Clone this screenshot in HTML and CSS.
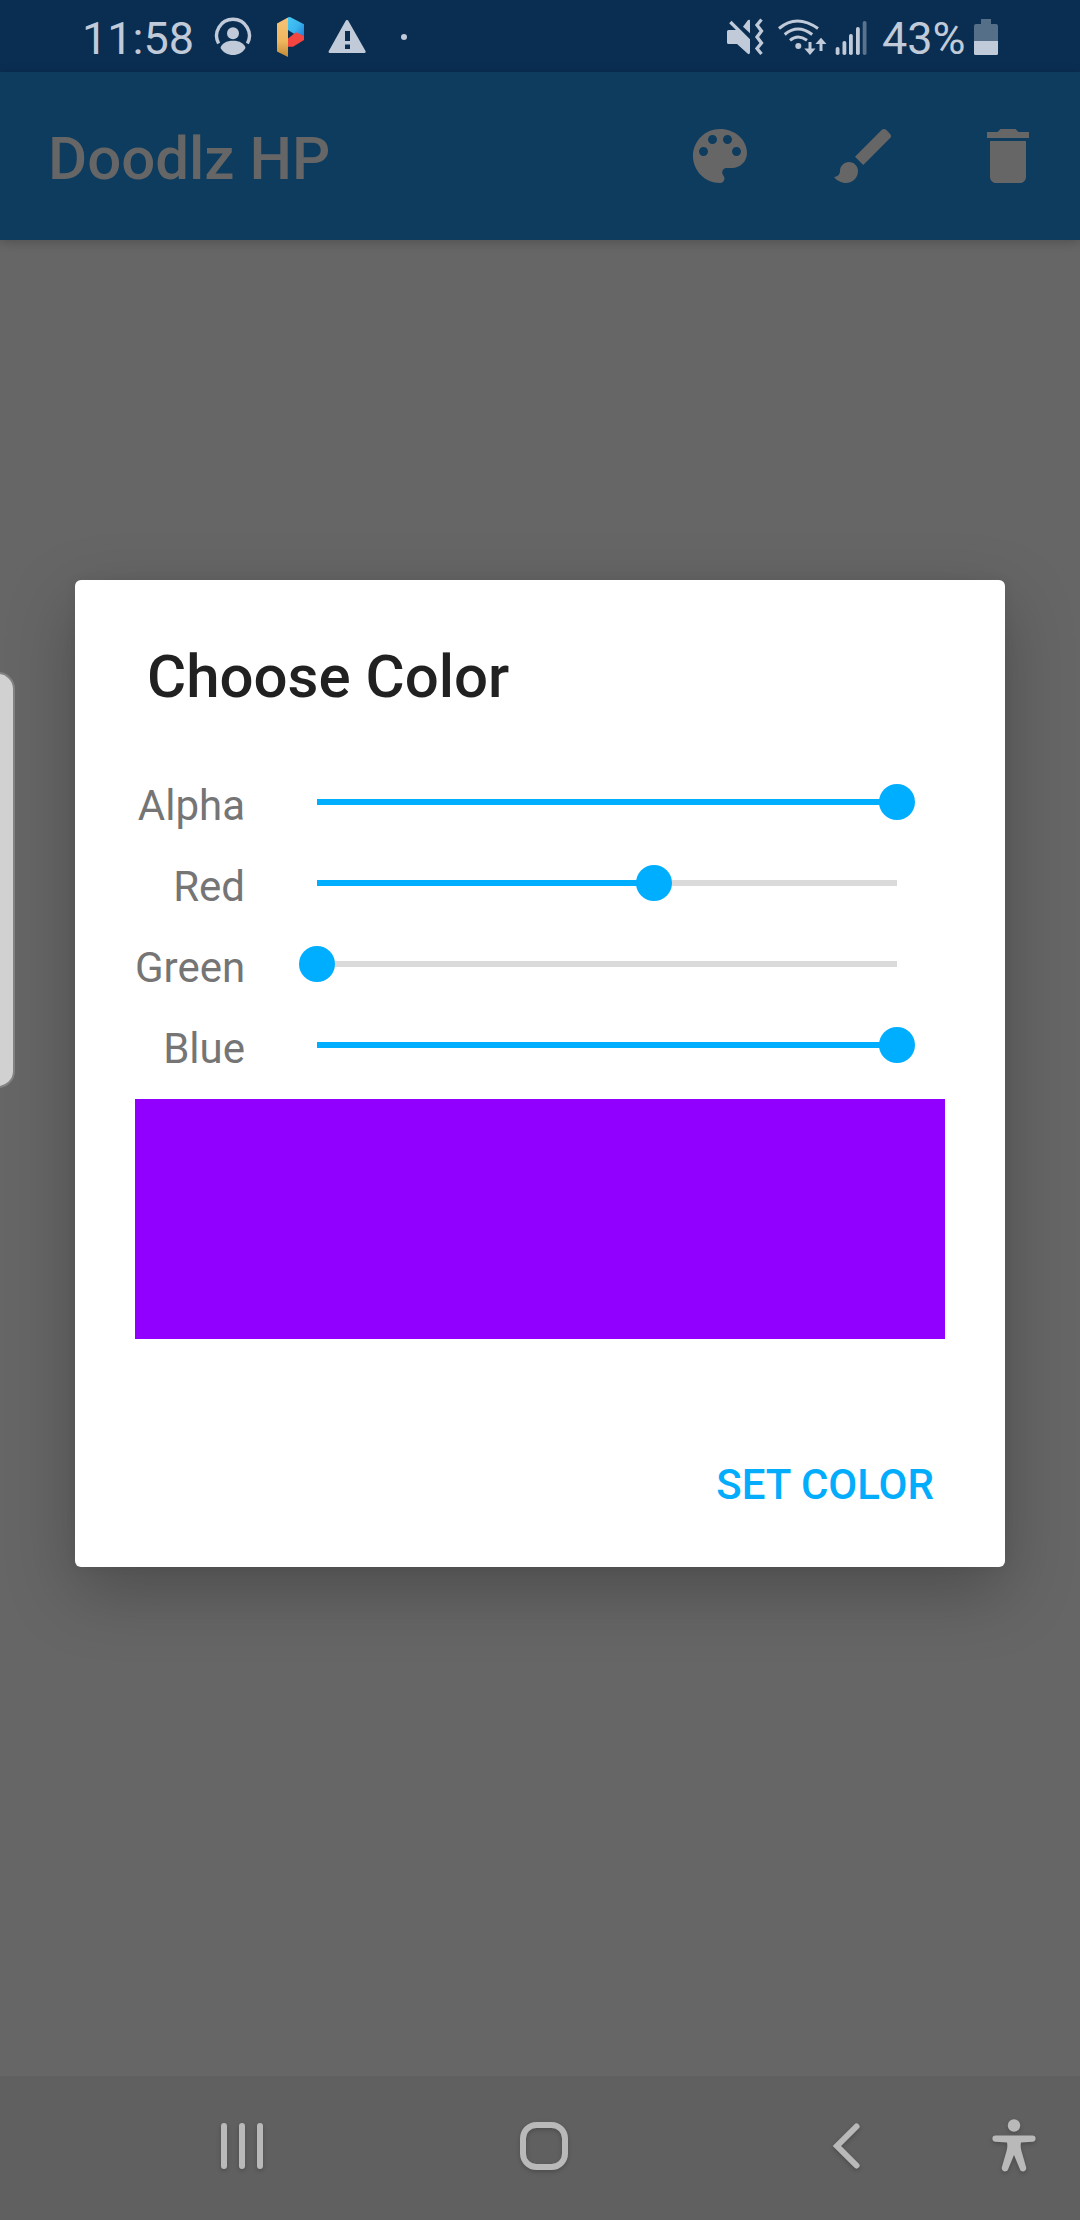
FILE: index.html
```html
<!DOCTYPE html>
<html lang="en">
<head>
<meta charset="utf-8">
<title>Doodlz HP</title>
<link rel="stylesheet" href="styles.css">
</head>
<body>
<div class="screen">
  <header class="status-bar">
    <div class="status-group">
      <span class="clock">11:58</span>
      <svg class="icon-user" width="38" height="40" viewBox="214 17 38 40" fill="currentColor">
        <path d="M218.6 43.5A16.4 16.4 0 1 1 247.4 43.5" fill="none" stroke="currentColor" stroke-width="3.4"/>
        <circle cx="233" cy="33.2" r="6"/>
        <path d="M220.5 48c1-4.500 6-7.200 12.500-7.200s11.500 2.700 12.500 7.200c-2.500 4.500-7.500 7-12.500 7s-10-2.500-12.500-7z"/>
      </svg>
      <svg class="icon-p" width="30" height="42" viewBox="276 16 30 42">
        <defs>
          <linearGradient id="gold" x1="0" y1="0" x2="0" y2="1"><stop offset="0" stop-color="#f6c277"/><stop offset=".6" stop-color="#f0b65e"/><stop offset="1" stop-color="#c08b37"/></linearGradient>
          <linearGradient id="sky" x1="0" y1="0" x2="1" y2="1"><stop offset="0" stop-color="#46c8f4"/><stop offset=".5" stop-color="#39b4ee"/><stop offset="1" stop-color="#1c72d2"/></linearGradient>
        </defs>
        <path d="M288 17.200 290 17l14 7.300V40L288 30z" fill="url(#sky)"/>
        <path d="M288 38.500l8-6.300 8 3.800v4l-11 6.800h-5z" fill="#f54540"/>
        <path d="M277 23.500l11-6V57l-11-5.500z" fill="url(#gold)"/>
      </svg>
      <svg class="icon-warn" width="38" height="34" viewBox="328 20 38 34">
        <path fill="currentColor" fill-rule="evenodd" d="M345.700 20.700q1.300-1.500 2.600 0L365.500 51q.6 2-1.200 2H330q-2-.1-1.200-2zM345 31v10h5V31zM345 44.500V49h5v-4.500z"/>
      </svg>
      <span class="more-dot"></span>
    </div>
    <div class="status-group">
      <svg width="38" height="38" viewBox="727 18 38 38" fill="currentColor">
        <path d="M727 31.500q0-1.500 1.500-1.500h7.500l-6.800-6.700 2.300-2.500L750 39.200V52q0 3-2.200 1.800L737 44h-8.500q-1.500 0-1.500-1.500zM743 26.800l5-6.800q2-1 2 .8v12.400z"/>
        <path d="M761.500 19.500l-4.500 5.500 4.500 6-4.500 6 4.500 6-4.500 5.500 4.500 5.500" fill="none" stroke="currentColor" stroke-width="3.300"/>
      </svg>
      <svg class="icon-wifi" width="50" height="38" viewBox="777 18 50 38">
        <g fill="none" stroke="currentColor" stroke-width="3">
          <path d="M779 28.500q17.500-15 39 0M784.700 34.500q13-11 27.500 0M790 40.300q8-6.500 17 0"/>
        </g>
        <circle cx="798.300" cy="46" r="3" fill="currentColor"/>
        <path fill="currentColor" d="M808.500 42h3v6.500h4L810 55l-5.700-6.500h4.200zM819.500 51h3v-7h4L821 37.800l-5.600 6.200h4.100z"/>
      </svg>
      <svg class="icon-signal" width="34" height="36" viewBox="835 20 34 36" fill="currentColor">
        <rect x="835.700" y="47" width="3.800" height="8" rx="1.800"/><rect x="842.500" y="41" width="3.800" height="14" rx="1.800"/><rect x="849" y="34" width="3.800" height="21" rx="1.800"/><rect x="856" y="27" width="3.800" height="28" rx="1.800"/><rect x="862.700" y="21" width="3.800" height="34" rx="1.800" fill="#5a728b"/>
      </svg>
      <span class="battery-level">43%</span>
      <svg class="icon-battery" width="24" height="36" viewBox="974 19 24 36">
        <path fill="#566f88" d="M974 42V26q0-2 2-2h5v-5h10v5h5q2 0 2 2v16z"/>
        <path fill="currentColor" d="M974 41h24v12.500q0 1.500-1.500 1.500h-21q-1.500 0-1.500-1.500z"/>
      </svg>
    </div>
  </header>

  <div class="app-bar">
    <h1 class="app-title">Doodlz HP</h1>
    <nav class="actions">
      <svg viewBox="0 0 24 24"><path d="M12 3c-4.970 0-9 4.030-9 9s4.030 9 9 9c.83 0 1.500-.67 1.500-1.500 0-.39-.15-.74-.39-1.010-.23-.26-.38-.61-.38-.99 0-.83.67-1.500 1.500-1.500H16c2.760 0 5-2.240 5-5 0-4.420-4.030-8-9-8zm-5.500 9c-.83 0-1.500-.67-1.500-1.500S5.670 9 6.500 9 8 9.670 8 10.500 7.330 12 6.500 12zm3-4C8.670 8 8 7.330 8 6.500S8.670 5 9.500 5s1.500.67 1.500 1.500S10.330 8 9.500 8zm5 0c-.83 0-1.500-.67-1.500-1.500S13.670 5 14.500 5s1.500.67 1.500 1.500S15.330 8 14.500 8zm3 4c-.83 0-1.500-.67-1.500-1.500S16.670 9 17.500 9s1.500.67 1.500 1.500-.67 1.500-1.500 1.500z"/></svg>
      <svg viewBox="0 0 24 24"><path d="M7 14c-1.660 0-3 1.340-3 3 0 1.310-1.160 2-2 2 .92 1.220 2.490 2 4 2 2.210 0 4-1.790 4-4 0-1.660-1.340-3-3-3zm13.710-9.370l-1.340-1.340c-.39-.39-1.020-.39-1.410 0L9 12.250 11.750 15l8.960-8.960c.39-.39.39-1.020 0-1.410z"/></svg>
      <svg viewBox="0 0 24 24"><path d="M6 19c0 1.100.9 2 2 2h8c1.100 0 2-.9 2-2V7H6v12zM19 4h-3.500l-1-1h-5l-1 1H5v2h14V4z"/></svg>
    </nav>
  </div>

  <main class="canvas">
    <span class="edge-handle"></span>
    <section class="dialog">
      <h2 class="dialog-title">Choose Color</h2>
      <div class="sliders">
        <div class="row"><span class="label">Alpha</span><div class="slider"><div class="fill" style="width:100%"></div><span class="thumb" style="left:100%"></span></div></div>
        <div class="row"><span class="label">Red</span><div class="slider"><div class="fill" style="width:58.100%"></div><span class="thumb" style="left:58.100%"></span></div></div>
        <div class="row"><span class="label">Green</span><div class="slider"><div class="fill" style="width:0%"></div><span class="thumb" style="left:0%"></span></div></div>
        <div class="row"><span class="label">Blue</span><div class="slider"><div class="fill" style="width:100%"></div><span class="thumb" style="left:100%"></span></div></div>
      </div>
      <div class="swatch"></div>
      <button class="set-color">SET COLOR</button>
    </section>
  </main>

  <footer class="nav-bar">
    <svg class="nav-recents" width="42" height="46" viewBox="0 0 42 46"><path d="M3 3v40M21 3v40M39 3v40"/></svg>
    <svg class="nav-home" width="48" height="48" viewBox="0 0 48 48"><rect x="3" y="3" width="42" height="42" rx="13.500"/></svg>
    <svg class="nav-back" width="28" height="46" viewBox="0 0 28 46"><path d="M23.500 3.500 4 23l19.500 19.500"/></svg>
    <svg class="nav-access" width="44" height="53" viewBox="0 0 44 53"><circle cx="22" cy="6.500" r="6.200"/><path d="M3.500 16.500h37a3.100 3.100 0 0 1 0 6.200L29 23.500q-.8 4 .3 8l4.900 17c.8 4-4.700 5.500-6.200 2L22 36l-6 14.500c-1.500 3.500-7 2-6.200-2l4.900-17q1.100-4 .3-8L3.500 22.700a3.100 3.100 0 0 1 0-6.200z"/></svg>
  </footer>
</div>
</body>
</html>
```

FILE: styles.css
```css
* { box-sizing: border-box; }

body {
  margin: 0;
  font-family: Roboto, "Noto Sans", sans-serif;
}

.screen {
  display: flex;
  flex-direction: column;
  width: 1080px;
  height: 2220px;
  overflow: hidden;
  background: #666;
}

svg { display: block; flex: none; }

/* Status bar */
.status-bar {
  display: flex;
  justify-content: space-between;
  height: 72px;
  padding: 0 82px;
  background: #0a2e52;
  color: #c0cad8;
}

.status-group {
  display: flex;
  align-items: center;
  height: 74px;
}

.clock, .battery-level {
  font-size: 45px;
  line-height: 53px;
  margin-top: 3px;
}
.clock { width: 110px; }
.icon-user { margin-left: 22px; }
.icon-p { margin-left: 24px; }
.icon-warn { margin-left: 22px; }
.more-dot {
  width: 6px;
  height: 6px;
  margin-left: 35px;
  border-radius: 50%;
  background: currentColor;
}
.icon-wifi { margin-left: 12px; }
.icon-signal { margin: 2px 0 0 8px; }
.battery-level { width: 83px; margin-left: 13px; }
.icon-battery { margin-left: 9px; }

/* App bar */
.app-bar {
  display: flex;
  align-items: center;
  justify-content: space-between;
  height: 168px;
  padding: 0 36px 0 48px;
  background: #0d3c5f;
  color: #666;
  box-shadow: 0 2px 10px rgba(0, 0, 0, .22);
}
.app-title {
  margin: 5px 0 0;
  font-size: 60px;
  line-height: 70px;
  font-weight: 500;
}
.actions { display: flex; gap: 72px; }
.actions svg { width: 72px; height: 72px; fill: currentColor; }

/* Canvas and dialog */
.canvas {
  position: relative;
  flex: 1;
  padding: 340px 75px 0;
}
.edge-handle {
  position: absolute;
  left: -20px;
  top: 432px;
  width: 35px;
  height: 416px;
  border: 2px solid #828282;
  border-radius: 17px;
  background: #d1d1d1;
}
.dialog {
  display: flex;
  flex-direction: column;
  height: 987px;
  padding: 62px 60px 0;
  border-radius: 6px;
  background: #fff;
  box-shadow: 0 24px 68px rgba(0, 0, 0, .25), 0 0 12px rgba(0, 0, 0, .05);
}
.dialog-title {
  margin: 0 0 50px 12px;
  font-size: 60px;
  line-height: 70px;
  font-weight: 500;
  color: #212121;
}
.sliders { height: 337px; }
.row {
  display: flex;
  align-items: flex-start;
  height: 81px;
}
.label {
  width: 110px;
  margin-top: 19px;
  font-size: 42px;
  line-height: 49px;
  text-align: right;
  white-space: nowrap;
  color: #757575;
}
.slider {
  position: relative;
  width: 580px;
  height: 6px;
  margin: 37px 0 0 72px;
  background: #dadada;
}
.fill { height: 6px; background: #00aeff; }
.thumb {
  position: absolute;
  top: -15px;
  width: 36px;
  height: 36px;
  margin-left: -18px;
  border-radius: 50%;
  background: #00aeff;
}
.swatch { height: 240px; background: #9100ff; }
.set-color {
  align-self: flex-end;
  margin: 121px 11px 0 0;
  padding: 0;
  border: 0;
  background: none;
  font: 500 42px/49px Roboto, "Noto Sans", sans-serif;
  color: #03adfc;
}

/* Navigation bar */
.nav-bar {
  display: flex;
  align-items: center;
  height: 144px;
  padding: 0 44px 4px 221px;
  background: #606060;
}
.nav-bar svg {
  fill: none;
  stroke: #b9b9b9;
  stroke-width: 6px;
  stroke-linecap: round;
  overflow: visible;
  filter: drop-shadow(0 2px 2px rgba(0, 0, 0, .2));
}
.nav-recents { margin-right: 257px; }
.nav-back { margin-left: 265px; }
.nav-bar .nav-access {
  margin: 0 0 1px auto;
  fill: #b9b9b9;
  stroke: none;
}
```
